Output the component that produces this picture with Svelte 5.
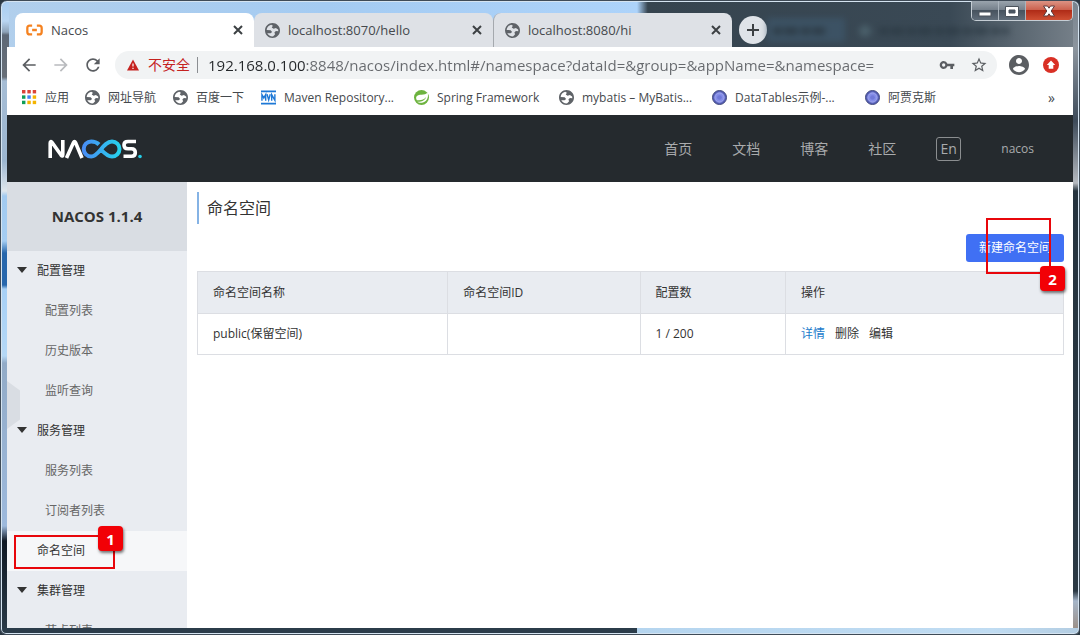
<script>
  const tabs = [
    { title: 'Nacos', icon: 'nacos', active: true },
    { title: 'localhost:8070/hello', icon: 'globe' },
    { title: 'localhost:8080/hi', icon: 'globe' }
  ];
  const bookmarks = [
    { title: '应用', icon: 'apps', w: 63 },
    { title: '网址导航', icon: 'globe', w: 88 },
    { title: '百度一下', icon: 'globe', w: 88 },
    { title: 'Maven Repository...', icon: 'mvn', w: 153 },
    { title: 'Spring Framework', icon: 'spring', w: 145 },
    { title: 'mybatis – MyBatis...', icon: 'globe', w: 153 },
    { title: 'DataTables示例-...', icon: 'disc', w: 153 },
    { title: '阿贾克斯', icon: 'disc', w: 90 }
  ];
  const nav = ['首页', '文档', '博客', '社区'];
  const menu = [
    { label: '配置管理', group: true },
    { label: '配置列表' },
    { label: '历史版本' },
    { label: '监听查询' },
    { label: '服务管理', group: true },
    { label: '服务列表' },
    { label: '订阅者列表' },
    { label: '命名空间', active: true },
    { label: '集群管理', group: true },
    { label: '节点列表' }
  ];
  const colors = ['#db4437', '#db4437', '#db4437', '#0f9d58', '#4285f4', '#f4b400', '#0f9d58', '#f4b400', '#f4b400'];
  let url = $state('192.168.0.100:8848/nacos/index.html#/namespace?dataId=&group=&appName=&namespace=');
</script>

{#snippet icon(name)}
  {#if name === 'globe'}
    <svg class="ico" viewBox="2 2 20 20" aria-hidden="true"><path fill="#5f6368" d="M12 2C6.48 2 2 6.48 2 12s4.48 10 10 10 10-4.48 10-10S17.52 2 12 2zM4.200 11.200C4.600 7.800 7 5 10.200 4.300L12.500 5.500 11 8 13.500 9.500 16.500 8.500 19.500 10.500 19.800 13 16.500 12.500 14.500 14.500 15.500 17 13 19.800C9.500 20.200 6.500 18.300 5 15.500L9.500 15.800 11.500 14 9.500 11.500z" /></svg>
  {:else if name === 'nacos'}
    <svg class="ico wide" viewBox="0 0 18 12" fill="none" stroke="#f58220" stroke-width="2.400" aria-hidden="true"><path d="M6.500 1.300H4Q1.400 1.300 1.400 4v4Q1.400 10.700 4 10.700H6.500M11.500 1.300h2.500Q16.600 1.300 16.600 4v4Q16.600 10.700 14 10.700H11.500M6.500 6h5" /></svg>
  {:else if name === 'apps'}
    <svg class="ico" viewBox="0 0 14 14" aria-hidden="true">
      {#each colors as c, i}<rect x={(i % 3) * 5} y={Math.floor(i / 3) * 5} width="3.200" height="3.200" fill={c} />{/each}
    </svg>
  {:else if name === 'mvn'}
    <svg class="ico" viewBox="0 0 16 15" fill="none" stroke="#1d78d6" aria-hidden="true"><path stroke-width="2" d="M0 1h16M0 14h16" /><path stroke-width="1.500" d="M1 11V4.500l2 3.500 2-3.500V11M6.500 4l1.700 6L9.900 4M11.400 11V4.500l3.400 6V4" /></svg>
  {:else if name === 'spring'}
    <svg class="ico" viewBox="0 0 16 16" aria-hidden="true"><circle cx="8" cy="8" r="8" fill="#6db33f" /><path fill="#fff" d="M14.500 2.500c1.500 6-1 10.500-6 11-2.300.2-4-.3-5-1 4 .3 8-1 9.500-5-2.500 3-6 4-10 3.300C.8 7 4 5.200 8 5.100c3 0 5-.6 6.500-2.600z" /></svg>
  {:else}
    <svg class="ico" viewBox="0 0 16 16" aria-hidden="true"><circle cx="8" cy="8" r="7.500" fill="#555fb8" stroke="#3f4677" /><circle cx="8" cy="8" r="5" fill="#858ee8" stroke="#a7adf0" /><circle cx="8" cy="8" r="2.500" fill="#7079d8" /></svg>
  {/if}
{/snippet}

<div class="window">
  <div class="titlebar">
    <div class="tabs" role="tablist">
      {#each tabs as tab}
        <div class="tab" class:active={tab.active}>
          <button class="tab-main" role="tab" aria-selected={!!tab.active}>{@render icon(tab.icon)}<span>{tab.title}</span></button>
          <button class="close" aria-label="关闭标签页"><svg viewBox="0 0 10 10"><path d="M1 1l8 8M9 1L1 9" /></svg></button>
        </div>
      {/each}
      <button class="new-tab" aria-label="新标签页"><svg viewBox="0 0 12 12"><path d="M6 0v12M0 6h12" /></svg></button>
      <svg class="glass" viewBox="0 0 260 34" aria-hidden="true">
        <rect x="0" y="5" width="78" height="24" fill="#3f5a70" />
        <path stroke="#27353f" stroke-width="7" stroke-dasharray="9 2 14 3" d="M6 18h52M112 18h130" />
        <circle cx="98" cy="18" r="6" fill="#56707a" />
      </svg>
    </div>
    <div class="controls">
      <button aria-label="最小化"><svg viewBox="0 0 14 14"><rect x="1" y="8" width="12" height="4" fill="#fff" stroke="#4b535c" /></svg></button>
      <button aria-label="最大化"><svg viewBox="0 0 14 14"><path fill="#fff" fill-rule="evenodd" stroke="#4b535c" d="M.5 2.500h13v10H.5zM4 6v3h6V6z" /></svg></button>
      <button class="exit" aria-label="关闭"><svg viewBox="0 0 14 14"><path fill="#fff" stroke="#5e3a3c" d="M1.500 2h4L7 4.200 8.500 2h4L9.200 7l3.300 5h-4L7 9.800 5.500 12h-4l3.300-5z" /></svg></button>
    </div>
  </div>

  <div class="toolbar">
    <button class="tool" aria-label="后退"><svg viewBox="0 0 24 24"><path d="M20 11H7.830l5.590-5.590L12 4l-8 8 8 8 1.410-1.410L7.830 13H20v-2z" /></svg></button>
    <button class="tool dim" aria-label="前进"><svg viewBox="0 0 24 24"><path d="M12 4l-1.410 1.410L16.170 11H4v2h12.170l-5.580 5.590L12 20l8-8z" /></svg></button>
    <button class="tool" aria-label="刷新"><svg viewBox="0 0 24 24"><path d="M17.650 6.350C16.200 4.900 14.210 4 12 4c-4.420 0-7.990 3.580-7.990 8s3.570 8 7.990 8c3.730 0 6.840-2.550 7.730-6h-2.080c-.82 2.330-3.040 4-5.650 4-3.310 0-6-2.690-6-6s2.690-6 6-6c1.660 0 3.140.69 4.220 1.780L13 11h7V4l-2.350 2.350z" /></svg></button>
    <div class="omnibox">
      <svg class="warn" viewBox="0 0 12 12" aria-hidden="true"><path fill="#c5221f" d="M6 .5L12 11.500H0z" /><path stroke="#fff" stroke-width="1.200" d="M6 4.500v3M6 8.700v1.200" /></svg>
      <label for="address">不安全</label>
      <span class="sep"></span>
      <input id="address" type="text" bind:value={url} spellcheck="false" />
      <button class="tool" aria-label="密码"><svg viewBox="0 0 24 24"><path fill-rule="evenodd" d="M12.650 10A6 6 0 0 0 7 6c-3.310 0-6 2.690-6 6s2.690 6 6 6a6 6 0 0 0 5.650-4H17v4h4v-4h2v-4H12.650zM7 14.500a2.500 2.500 0 1 1 0-5 2.500 2.500 0 0 1 0 5z" /></svg></button>
      <button class="tool star" aria-label="加入书签"><svg viewBox="0 0 24 24"><path d="M22 9.240l-7.190-.62L12 2 9.190 8.630 2 9.240l5.460 4.730L5.820 21 12 17.270 18.180 21l-1.630-7.030L22 9.240zM12 15.400l-3.760 2.270 1-4.280-3.320-2.880 4.380-.38L12 6.100l1.710 4.040 4.380.38-3.320 2.880 1 4.280L12 15.400z" /></svg></button>
    </div>
    <button class="tool user" aria-label="用户"><svg viewBox="2 2 20 20"><path d="M12 2C6.480 2 2 6.480 2 12s4.480 10 10 10 10-4.480 10-10S17.520 2 12 2zm0 3c1.660 0 3 1.340 3 3s-1.340 3-3 3-3-1.340-3-3 1.340-3 3-3zm0 14.200c-2.500 0-4.710-1.280-6-3.220.03-1.990 4-3.080 6-3.080 1.990 0 5.970 1.090 6 3.080-1.290 1.940-3.500 3.220-6 3.220z" /></svg></button>
    <button class="tool update" aria-label="更新"><svg viewBox="0 0 16 16"><circle cx="8" cy="8" r="8" fill="#d93025" /><path fill="#fff" d="M8 3.500L12.200 8H10.300v3.800H5.700V8H3.800z" /></svg></button>
  </div>

  <nav class="bookmarks" aria-label="书签">
    {#each bookmarks as b}
      <a href="#top" style="width:{b.w}px">{@render icon(b.icon)}<span>{b.title}</span></a>
    {/each}
    <button class="more" aria-label="更多书签">»</button>
  </nav>

  <header>
    <svg class="logo" viewBox="0 0 94 20" role="img" aria-label="NACOS">
      <defs><linearGradient id="loop" x1="34" x2="73" y1="0" y2="0" gradientUnits="userSpaceOnUse"><stop offset="0" stop-color="#4a8bf5" /><stop offset="1" stop-color="#25d4ec" /></linearGradient></defs>
      <g fill="none" stroke-width="3.600">
        <path stroke="#fff" d="M2.200 19V4Q2.200 1.500 4 3.500L13 16Q14.800 18.200 14.800 15.500V1M18.500 19L25.500 3.500Q26.500 1.500 27.500 3.500L34 19" />
        <path stroke="#fff" d="M88 2.500H80Q76 2.500 76 6Q76 9.700 80 9.700H83.500Q87.300 9.700 87.300 13.500Q87.300 17.300 83.500 17.300H75.500" />
        <path stroke="url(#loop)" stroke-width="4" d="M51 5.500C48.500 3 46.500 2.500 43.200 2.500A7.500 7.500 0 0 0 43.200 17.500C51 17.500 55 2.500 64 2.500A7.500 7.500 0 0 1 64 17.500C60 17.500 57.500 15.500 53.500 11" />
      </g>
      <circle cx="92" cy="17.500" r="1.800" fill="#25cfe8" />
    </svg>
    <nav aria-label="主导航">
      {#each nav as item}<a href="#top">{item}</a>{/each}
      <button class="lang">En</button>
      <a class="account" href="#top">nacos</a>
    </nav>
  </header>

  <div class="body">
    <aside>
      <h1>NACOS 1.1.4</h1>
      <ul>
        {#each menu as m}
          <li class:group={m.group} class:active={m.active}>
            <a href="#top">{m.label}</a>
            {#if m.active}<span class="mark first"><b>1</b></span>{/if}
          </li>
        {/each}
      </ul>
      <button class="handle" aria-label="收起菜单"></button>
    </aside>
    <main>
      <h2>命名空间</h2>
      <div class="actions">
        <div class="create-wrap">
          <button class="create">新建命名空间</button>
          <span class="mark second"><b>2</b></span>
        </div>
      </div>
      <table>
        <colgroup><col style="width:28.9%" /><col style="width:22.2%" /><col style="width:16.8%" /><col /></colgroup>
        <thead><tr><th>命名空间名称</th><th>命名空间ID</th><th>配置数</th><th>操作</th></tr></thead>
        <tbody>
          <tr>
            <td>public(保留空间)</td><td></td><td>1 / 200</td>
            <td><div class="ops"><a class="primary" href="#top">详情</a><a href="#top">删除</a><a href="#top">编辑</a></div></td>
          </tr>
        </tbody>
      </table>
    </main>
  </div>
</div>

<style>
  :global(body) { margin: 0; overflow: hidden; background: #2b3843; }
  :global(*) { box-sizing: border-box; }
  button { border: 0; padding: 0; background: none; font: inherit; color: inherit; cursor: pointer; }
  a { color: inherit; text-decoration: none; white-space: nowrap; }
  svg { display: block; flex: none; }
  .window {
    display: flex; flex-direction: column; height: 100vh; padding: 0 6px 6px;
    font: 12px/20px "Open Sans", "Noto Sans CJK SC", sans-serif; color: #333;
    border: 1px solid #3f4b57; border-radius: 7px 7px 6px 6px;
    box-shadow: inset 0 0 0 1px #d5e4f1;
    background:
      linear-gradient(90deg, #2b3c4a 59%, #b5d5ef 59%, #c0dcf2 92%, #b3cde2) bottom / 100% 6px no-repeat,
      linear-gradient(#a8cdf1 0, #b9d6f2 20px, #8ea3b8 31px, #5d6876 34px, #686f78 76px, #a6bdd5 80px, #9cb6d0 160px, #dfe6ec 190px, #a2caf0 195px, #a5cdf2 240px, #2867ac 252px, #2867ac 284px, #a7d0f6 288px, #b5d8f6 355px, #92abc7 362px, #9db9dc 525px, #101924 540px, #2b3b48) left / 8px 100% no-repeat,
      linear-gradient(#78838e 0, #8c959e 48px, #3d4a59 120px, #b5b9bf 182px, #25333e 190px, #2b3944 590px, #a5b5c8 600px, #9a897b) right / 6px 100% no-repeat,
      linear-gradient(90deg, #b1cfec, #a4cbf2 30%, #add3fa 59%, #36444f 60%, #3a4955 88%, #77818a);
  }
  .titlebar { display: flex; justify-content: space-between; height: 46px; flex: none; }
  .tabs { display: flex; align-items: flex-end; flex: 1; min-width: 0; padding-left: 8px; }
  .tab {
    display: flex; align-items: center; flex: 0 1 239px; min-width: 0; height: 34px;
    padding: 0 11px; background: #dee1e6; border-radius: 8px 8px 0 0; font-size: 13px; color: #45494d;
  }
  .tab.active { background: #fff; }
  .tab:nth-child(3) { border-left: 1px solid #a5a9ae; }
  .tab-main { display: flex; align-items: center; gap: 8px; flex: 1; min-width: 0; text-align: left; white-space: nowrap; }
  .close { width: 10px; height: 10px; }
  .close svg, .new-tab svg { width: 100%; fill: none; stroke: #3c4043; stroke-width: 2; }
  .new-tab { width: 28px; height: 28px; flex: none; margin: 0 0 3px 7px; padding: 8px; border-radius: 50%; background: #dfe3e8; }
  .glass { width: 260px; height: 34px; margin-right: -260px; filter: blur(3px); opacity: .6; }
  .ico { width: 15px; height: 15px; }
  .ico.wide { width: 17px; height: 12px; }
  .controls { position: relative; display: flex; flex: none; height: 20px; border: 1px solid #c5cdd4; border-top: 0; border-radius: 0 0 5px 5px; overflow: hidden; }
  .controls button {
    display: grid; place-items: center; width: 27px; border-right: 1px solid #aab4bd;
    background: linear-gradient(#9aa4ad, #76818c 45%, #47535f 50%, #5f6c79);
  }
  .controls svg { width: 14px; }
  .controls .exit { width: 46px; border: 0; background: linear-gradient(#dc9384, #cc6350 45%, #b02c18 50%, #cf4f33); }
  .toolbar { display: flex; align-items: center; height: 36px; flex: none; background: #fff; padding: 0 14px 0 12px; }
  .tool { width: 20px; height: 20px; flex: none; margin-right: 12px; }
  .tool svg { width: 100%; fill: #5b5e62; }
  .dim svg { fill: #b9bbbe; }
  .omnibox { display: flex; align-items: center; flex: 1; min-width: 0; height: 28px; padding: 0 9px 0 12px; margin-right: 12px; border-radius: 14px; background: #f1f3f4; font-size: 14px; }
  .warn { width: 12px; height: 12px; }
  .omnibox label { margin-left: 9px; color: #c5221f; }
  .sep { width: 1px; height: 16px; margin: 0 10px 0 7px; background: #8b8e92; }
  .omnibox input {
    flex: 1; min-width: 0; border: 0; padding: 0; outline: 0; height: 24px; font: 15px/24px "Open Sans", sans-serif;
    color: transparent; caret-color: #24272a; background: linear-gradient(90deg, #24272a 98px, #66696d 98px); -webkit-background-clip: text; background-clip: text;
  }
  .omnibox .tool { width: 16px; height: 16px; margin: 0 0 0 16px; }
  .omnibox .star { width: 18px; height: 18px; margin-left: 15px; }
  .user { margin-right: 14px; }
  .update { width: 16px; height: 16px; margin: 0; }
  .bookmarks { display: flex; align-items: center; height: 32px; flex: none; padding: 0 18px 3px 15px; background: #fff; color: #45494d; }
  .bookmarks a { display: flex; align-items: center; gap: 8px; flex: none; }
  .more { margin-left: auto; font-size: 14px; }
  header { display: flex; align-items: center; justify-content: space-between; height: 67px; flex: none; padding: 0 39px 0 41px; background: #252a2e; color: #a9abad; }
  .logo { width: 94px; height: 20px; }
  header nav { display: flex; align-items: center; gap: 40px; font-size: 14px; }
  .lang { width: 25px; height: 24px; border: 1px solid #8b8e90; border-radius: 3px; }
  .account { font-size: 12px; }
  .body { display: flex; flex: 1; min-height: 0; background: #fff; overflow: hidden; }
  aside { position: relative; width: 180px; flex: none; background: #e9ecf1; }
  h1 { margin: 0; background: #d9dde3; text-align: center; font-size: 15px; line-height: 69px; font-weight: 700; }
  ul { margin: 0; padding: 0; list-style: none; }
  li { position: relative; height: 40px; padding-left: 38px; line-height: 40px; color: #666; }
  li.group, li.active { padding-left: 30px; color: #333; }
  li.active { background: #f6f7f9; }
  li.group::before { content: ''; position: absolute; left: 10px; top: 16px; border: 5px solid transparent; border-top: 6px solid #333; border-bottom: 0; }
  .handle { position: absolute; left: 0; top: 199px; width: 13px; height: 48px; background: #d9dde3; clip-path: polygon(0 0, 100% 20%, 100% 80%, 0 100%); }
  .mark { position: absolute; border: 2px solid #e8060b; pointer-events: none; }
  .mark b {
    position: absolute; display: grid; place-items: center; width: 25px; height: 25px; border-radius: 4px;
    background: #f20006; color: #fff; font-size: 15px; line-height: 20px; box-shadow: 1px 2px 3px #0008;
  }
  .first { left: 7px; top: 4px; width: 101px; height: 34px; }
  .first b { left: 82px; top: -11px; }
  .second { left: 20px; top: -16px; width: 65px; height: 56px; }
  .second b { left: 52px; top: 46px; }
  main { flex: 1; min-width: 0; padding: 10px 9px 0 10px; }
  h2 { margin: 0; padding-left: 8px; border-left: 2px solid #85b3e5; font-size: 16px; line-height: 32px; font-weight: 400; }
  .actions { display: flex; justify-content: flex-end; padding: 10px 0 9px; }
  .create-wrap { position: relative; }
  .create { display: block; height: 28px; padding: 0 13px; border-radius: 3px; background: #4070f4; color: #fff; }
  table { width: 100%; table-layout: fixed; border-collapse: collapse; }
  th, td { height: 41px; padding: 0 15px; border: 1px solid #dcdee3; text-align: left; font-weight: 400; }
  th { height: 42px; background: #e9ecf1; }
  .ops { display: flex; gap: 10px; }
  .primary { color: #1b7bcb; }
</style>
